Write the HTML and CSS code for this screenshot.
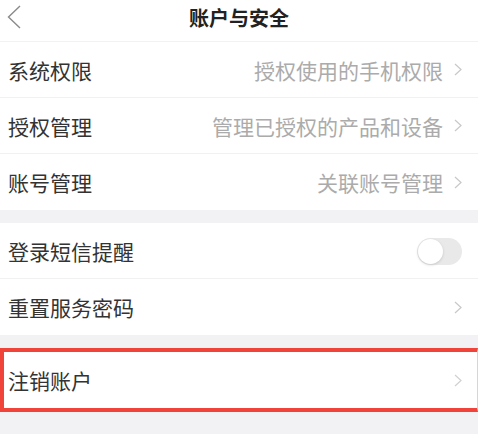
FILE: index.html
```html
<!DOCTYPE html>
<html lang="zh-CN">
<head>
<meta charset="utf-8">
<title>账户与安全</title>
<link rel="stylesheet" href="styles.css">
</head>
<body>
<div class="page">
  <div class="topline"></div>
  <header class="header">
    <svg class="back" width="14" height="24" viewBox="0 0 14 24"><polyline points="13,1 1.5,12 13,23" fill="none" stroke="#8a8a8a" stroke-width="1.4"/></svg>
    <h1 class="title">账户与安全</h1>
  </header>
  <section class="group">
    <div class="row">
      <span class="label">系统权限</span>
      <span class="value">授权使用的手机权限</span>
      <svg class="chev" width="8" height="13" viewBox="0 0 8 13"><polyline points="1,1 7,6.5 1,12" fill="none" stroke="#c8c8c8" stroke-width="1.2"/></svg>
    </div>
    <div class="row">
      <span class="label">授权管理</span>
      <span class="value">管理已授权的产品和设备</span>
      <svg class="chev" width="8" height="13" viewBox="0 0 8 13"><polyline points="1,1 7,6.5 1,12" fill="none" stroke="#c8c8c8" stroke-width="1.2"/></svg>
    </div>
    <div class="row">
      <span class="label">账号管理</span>
      <span class="value">关联账号管理</span>
      <svg class="chev" width="8" height="13" viewBox="0 0 8 13"><polyline points="1,1 7,6.5 1,12" fill="none" stroke="#c8c8c8" stroke-width="1.2"/></svg>
    </div>
  </section>
  <section class="group">
    <div class="row">
      <span class="label">登录短信提醒</span>
      <span class="toggle"><span class="knob"></span></span>
    </div>
    <div class="row">
      <span class="label">重置服务密码</span>
      <svg class="chev" width="8" height="13" viewBox="0 0 8 13"><polyline points="1,1 7,6.5 1,12" fill="none" stroke="#c8c8c8" stroke-width="1.2"/></svg>
    </div>
  </section>
  <section class="group">
    <div class="row highlight">
      <span class="label">注销账户</span>
      <svg class="chev" width="8" height="13" viewBox="0 0 8 13"><polyline points="1,1 7,6.5 1,12" fill="none" stroke="#d0d0d0" stroke-width="1.2"/></svg>
    </div>
  </section>
</div>
</body>
</html>
```

FILE: styles.css
```css
html, body {
  margin: 0;
  padding: 0;
  background: #f2f2f4;
  overflow: hidden;
}

.page {
  position: relative;
  width: 478px;
  height: 434px;
  font-family: "Noto Sans CJK SC", "Noto Sans", sans-serif;
  color: #333;
}

.topline {
  position: absolute;
  top: 0;
  left: 308px;
  right: 0;
  height: 2px;
  background: #c8c8c8;
}

.header {
  height: 34px;
  padding-bottom: 7px;
  border-bottom: 1px solid #f2f2f2;
  background: #fff;
  display: flex;
  align-items: center;
  justify-content: center;
  position: relative;
}

.back {
  position: absolute;
  left: 7px;
  top: 5px;
}

.title {
  margin: 0;
  font-size: 20px;
  font-weight: 700;
  color: #222;
  line-height: 24px;
  padding-top: 2px;
}

.group {
  background: #fff;
  display: flex;
  flex-direction: column;
  margin-bottom: 13px;
}

.row {
  height: 55px;
  display: flex;
  align-items: center;
  padding: 0 16px 0 8px;
  border-bottom: 1px solid #f1f1f1;
}

.row:last-child {
  border-bottom: none;
  height: 56px;
}

.label {
  font-size: 21px;
  color: #333;
  flex: 1;
  line-height: 24px;
}

.value {
  font-size: 21px;
  color: #ababab;
  margin-right: 11px;
  line-height: 24px;
}

.chev {
  flex: none;
}

.toggle {
  width: 45px;
  height: 27px;
  border-radius: 14px;
  background: #e9e9ea;
  display: flex;
  align-items: center;
  padding-left: 1px;
  box-sizing: border-box;
  margin-top: 2px;
}

.knob {
  width: 25px;
  height: 25px;
  border-radius: 50%;
  background: #fff;
  box-shadow: 0 1px 3px rgba(0, 0, 0, 0.15);
}

.highlight {
  border: 4px solid #f0433a;
  border-right: 1px solid #f8c9c3;
  padding-left: 4px;
  padding-right: 15px;
}

.group .row.highlight:last-child {
  height: 56px;
  border-bottom: 4px solid #f0433a;
}
```
